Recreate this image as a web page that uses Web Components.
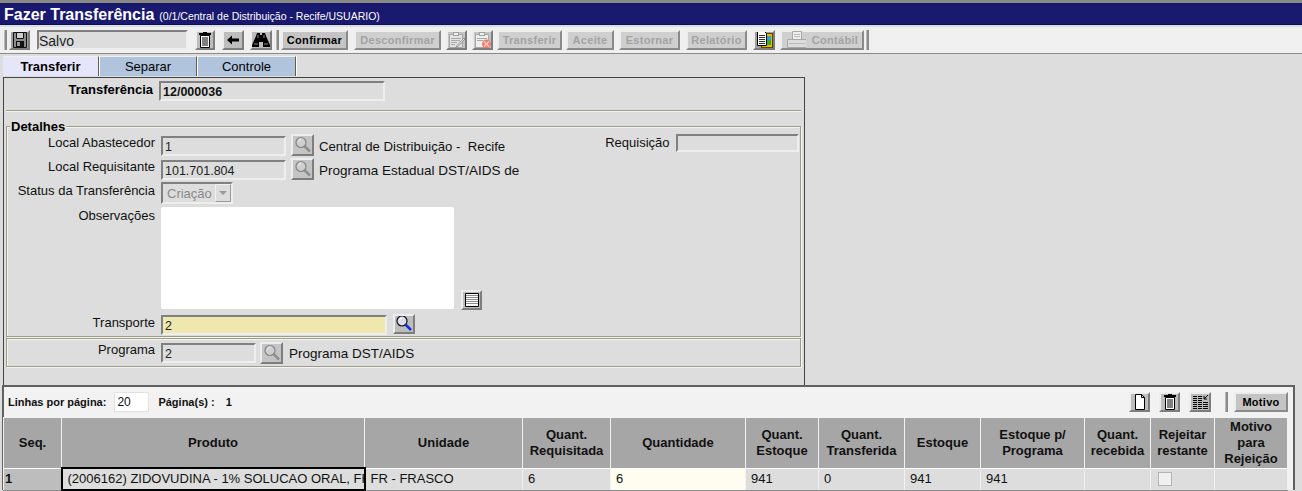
<!DOCTYPE html>
<html lang="pt-BR">
<head>
<meta charset="utf-8">
<title>Fazer Transferência</title>
<style>
  html, body { margin: 0; padding: 0; height: 491px; overflow: hidden; }
  body { background: #dcdddc; font-family: "Liberation Sans", Arial, sans-serif; font-size: 13px; color: #000; }
  app-toolbar > * { flex: none; }
  .desc { font-size: 13.500px; line-height: 16px; white-space: nowrap; }
</style>
</head>
<body>
<app-title sub="(0/1/Central de Distribuição - Recife/USUARIO)">Fazer Transferência</app-title>

<app-toolbar>
  <tool-grip style="margin-left:4px"></tool-grip>
  <icon-btn icon="save" dark style="--w:21px;--h:20px;margin-left:2px"></icon-btn>
  <sunken-field style="--w:151px;--h:20px;--fs:14px;--pl:0px;margin-left:7px">Salvo</sunken-field>
  <icon-btn icon="trash" style="--w:20px;--h:20px;margin-left:7px"></icon-btn>
  <icon-btn icon="arrow" style="--w:22px;--h:20px;margin-left:7px"></icon-btn>
  <icon-btn icon="binoculars" style="--w:22px;--h:20px;margin-left:6px"></icon-btn>
  <tool-grip style="margin-left:4px"></tool-grip>
  <text-btn style="--w:67px;margin-left:2px">Confirmar</text-btn>
  <text-btn disabled style="--w:87px;margin-left:6px">Desconfirmar</text-btn>
  <icon-btn icon="clipedit" flat style="--w:21px;--h:20px;margin-left:5px"></icon-btn>
  <icon-btn icon="clipx" flat style="--w:21px;--h:20px;margin-left:5px"></icon-btn>
  <text-btn disabled style="--w:65px;margin-left:4px">Transferir</text-btn>
  <text-btn disabled style="--w:48px;margin-left:4px">Aceite</text-btn>
  <text-btn disabled style="--w:61px;margin-left:5px">Estornar</text-btn>
  <text-btn disabled style="--w:61px;margin-left:6px">Relatório</text-btn>
  <icon-btn icon="report" dark style="--w:22px;--h:20px;margin-left:6px"></icon-btn>
  <text-btn disabled icon="printer" style="--w:84px;margin-left:5px">Contábil</text-btn>
  <tool-grip style="margin-left:2px"></tool-grip>
</app-toolbar>

<tab-bar>
  <tab-item active style="--w:95px">Transferir</tab-item>
  <tab-item style="--w:96px">Separar</tab-item>
  <tab-item style="--w:97px">Controle</tab-item>
</tab-bar>

<form-panel>
  <field-row strong label="Transferência" style="--lw:147px;margin-top:3px">
    <sunken-field style="--w:226px;--h:20px;--fw:bold;--fs:12.500px;--c:#111">12/000036</sunken-field>
  </field-row>
  <group-box style="--mt:9px;--bh:10px" nolegend></group-box>

  <group-box legend="Detalhes" style="--mt:6px;--bh:211px">
    <field-row label="Local Abastecedor" style="margin-top:-6px">
      <sunken-field style="--w:125px;--h:20px;--mt:2px;--fs:12.500px">1</sunken-field>
      <icon-btn icon="lookup" flat style="--w:23px;--h:22px;margin-left:5px"></icon-btn>
      <span class="desc" style="margin-left:5px;margin-top:5px;font-size:13.200px">Central de Distribuição -&nbsp; Recife</span>
      <label-text style="margin-left:100px;margin-top:1px">Requisição</label-text>
      <sunken-field style="--w:123px;--h:18px;margin:0 0 0 6px"></sunken-field>
    </field-row>
    <field-row label="Local Requisitante" style="margin-top:2px">
      <sunken-field style="--w:125px;--h:20px;--mt:2px;--fs:12.500px">101.701.804</sunken-field>
      <icon-btn icon="lookup" flat style="--w:23px;--h:22px;margin-left:5px"></icon-btn>
      <span class="desc" style="margin-left:5px;margin-top:5px">Programa Estadual DST/AIDS de</span>
    </field-row>
    <field-row label="Status da Transferência" style="margin-top:2px">
      <select-box value="Criação"></select-box>
    </field-row>
    <field-row label="Observações" style="margin-top:3px">
      <memo-box style="--w:293px;--h:102px"></memo-box>
      <icon-btn icon="lines" style="--w:21px;--h:20px;margin:83px 0 0 7px"></icon-btn>
    </field-row>
    <field-row label="Transporte" style="margin-top:4px">
      <sunken-field style="--w:226px;--h:20px;--mt:1px;--bg:#efe8ae;--fs:12.500px">2</sunken-field>
      <icon-btn icon="lookupblue" style="--w:22px;--h:20px;margin-left:6px"></icon-btn>
    </field-row>
  </group-box>

  <group-box style="--mt:1px;--bh:29px">
    <field-row label="Programa" style="margin-top:2px">
      <sunken-field style="--w:95px;--h:20px;--mt:2px;--fs:12.500px">2</sunken-field>
      <icon-btn icon="lookup" flat style="--w:23px;--h:22px;margin-left:4px;margin-top:1px"></icon-btn>
      <span class="desc" style="margin-left:6px;margin-top:5px">Programa DST/AIDS</span>
    </field-row>
  </group-box>
</form-panel>

<grid-panel></grid-panel>

<script>
const ICONS = {
  save: `<path d="M3.500 2.500h13v15h-13z" fill="#8c8c8c" stroke="#111"/><rect x="6" y="3" width="8" height="6" fill="#cfcfcf"/><path d="M6.500 3v5.500h7V3" fill="none" stroke="#111"/><rect x="6" y="11" width="8" height="6" fill="#111"/><rect x="7" y="12" width="3" height="4" fill="#9a9a9a"/>`,
  trash: `<path d="M8 2h4v1h4v2H4V3h4z" fill="#000"/><path d="M5.500 5.500h9v12h-9z" fill="#fff" stroke="#000"/><path d="M8 7v9M10 7v9M12 7v9" stroke="#000"/>`,
  arrow: `<path d="M4 10l5-4.500V8.500h7v3H9v3z" fill="#000"/>`,
  binoculars: `<path d="M6 3h3v2h2V3h3l1 3 4 9v2h-7v-5h-4v5H1v-2l4-9z" fill="#000"/><path d="M3 14h4M13 14h4M7 5v3M13 5v3" stroke="#8a8a8a"/>`,
  clipedit: `<path d="M2.500 4.500h13v13h-13z" fill="#e2e2e2" stroke="#a8a8a8"/><rect x="6.500" y="2.500" width="5" height="3" fill="#ededed" stroke="#a0a0a0"/><path d="M4 8.500h10M4 10.500h9M4 12.500h6M4 14.500h4" stroke="#a8a8a8"/><path d="M17 8l-7 7.500-1.500 2.500 2.500-1.500 7-7.500z" fill="#f2f2f2" stroke="#909090"/>`,
  clipx: `<path d="M2.500 4.500h13v13h-13z" fill="#eee" stroke="#a8a8a8"/><rect x="6.500" y="2.500" width="5" height="3" fill="#eee" stroke="#a0a0a0"/><path d="M4 8.500h10M4 10.500h6" stroke="#a8a8a8"/><circle cx="13.500" cy="14" r="4.500" fill="#e8806e"/><path d="M11 11.500l5 5M16 11.500l-5 5" stroke="#f4c8bc" stroke-width="1.500"/>`,
  report: `<rect x="7.500" y="3.500" width="11" height="14" fill="#e8b800" stroke="#5a4400"/><rect x="13" y="6" width="4" height="4" fill="#30a0e0"/><rect x="13" y="10" width="4" height="5" fill="#30b030"/><path d="M3.500 1.500h7l2 2v12h-9z" fill="#fff" stroke="#000"/><path d="M5 5.500h6M5 7.500h6M5 9.500h6M5 11.500h6M5 13.500h6" stroke="#333"/>`,
  printer: `<path d="M6.500 1.500h9v8h-9z" fill="#eee" stroke="#a8a8a8"/><path d="M8 4.500h6M8 6.500h6" stroke="#bbb"/><path d="M1.500 9.500h19v8h-19z" fill="#dcdcdc" stroke="#a8a8a8"/><path d="M3 13.500h16" stroke="#bbb"/>`,
  lookup: `<circle cx="8" cy="7.500" r="5" fill="#cfcfcf" stroke="#858585" stroke-width="1.200"/><path d="M5.500 6.500a3 3 0 0 1 2.500-2" stroke="#f4f4f4" fill="none"/><path d="M11.500 11l5.500 5.500" stroke="#8e8e8e" stroke-width="2.500"/>`,
  lookupblue: `<circle cx="8" cy="7" r="5" fill="#dde" stroke="#111" stroke-width="1.200"/><path d="M5.500 6a3 3 0 0 1 2.500-2" stroke="#fff" fill="none"/><path d="M11.500 10.500l5.500 5.500" stroke="#1030e0" stroke-width="2.500"/>`,
  lines: `<path d="M3.500 3.500h13v13h-13z" fill="#fff" stroke="#000"/><path d="M4 5.500h12M4 7.500h12M4 9.500h12M4 11.500h12M4 13.500h12" stroke="#8c8c8c"/>`,
  newdoc: `<path d="M5.500 2.500h6l3 3v12h-9z" fill="#fff" stroke="#000"/><path d="M11.500 2.500v3h3" fill="none" stroke="#000"/>`,
  columns: `<path d="M3 4.500h4M3 6.500h4M3 8.500h4M3 10.500h4M3 12.500h4M3 14.500h4M3 16.500h4M8 4.500h4M8 6.500h4M8 8.500h4M8 10.500h4M8 12.500h4M8 14.500h4M8 16.500h4M13 10.500h5M13 12.500h5M13 14.500h5M13 16.500h5" stroke="#000"/><path d="M18 3l-4 4M14 4v3h3" stroke="#000" fill="none"/>`
};

function svg(name) {
  return `<svg width="20" height="20" viewBox="0 0 20 20" aria-hidden="true">${ICONS[name] || ''}</svg>`;
}

class AppTitle extends HTMLElement {
  connectedCallback() {
    this.attachShadow({ mode: 'open' }).innerHTML = `
      <style>
        :host {
          display: flex; align-items: baseline; height: 22px; padding: 0 0 0 4px;
          background: #191970; color: #fff;
          border-top: 3px solid #8a8a84; border-bottom: 2px solid #d8dce8;
          box-shadow: inset 0 -1px 0 #10104a;
        }
        b { font: bold 16px/23px "Liberation Sans", sans-serif; }
        small { font: 10.500px/23px "Liberation Sans", sans-serif; margin-left: 5px; }
      </style>
      <b><slot></slot></b><small>${this.getAttribute('sub')}</small>`;
  }
}

class AppToolbar extends HTMLElement {
  connectedCallback() {
    this.attachShadow({ mode: 'open' }).innerHTML = `
      <style>
        :host {
          display: flex; align-items: center; height: 26px;
          background: #f0f0f0; border-bottom: 1px solid #8a8a8a;
        }
      </style>
      <slot></slot>`;
  }
}

class ToolGrip extends HTMLElement {
  connectedCallback() {
    this.attachShadow({ mode: 'open' }).innerHTML = `
      <style>
        :host { display: block; width: 1px; height: 20px; background: #8a8a8a; border-left: 1px solid #bbb; border-right: 1px solid #8a8a8a; }
      </style>`;
  }
}

class IconBtn extends HTMLElement {
  connectedCallback() {
    const flat = this.hasAttribute('flat');
    const dark = this.hasAttribute('dark');
    this.attachShadow({ mode: 'open' }).innerHTML = `
      <style>
        :host {
          display: flex; align-items: center; justify-content: center; box-sizing: border-box;
          width: var(--w); height: var(--h); overflow: hidden;
          background: ${dark ? '#a0a0a0' : flat ? '#c4c4c4' : '#bdbdbd'};
          border: 2px solid; border-color: #ededed #7d7d7d #7d7d7d #ededed;
        }
        svg { flex: none; }
      </style>
      ${svg(this.getAttribute('icon'))}`;
  }
}

class TextBtn extends HTMLElement {
  connectedCallback() {
    const off = this.hasAttribute('disabled');
    const icon = this.getAttribute('icon');
    this.attachShadow({ mode: 'open' }).innerHTML = `
      <style>
        :host {
          display: flex; align-items: center; justify-content: center; box-sizing: border-box;
          width: var(--w); height: 20px; gap: 6px;
          background: ${off ? '#cfcfcf' : '#c4c4c4'};
          border: 2px solid; border-color: #ededed #8a8a8a #8a8a8a #ededed;
          font: bold 11px "Liberation Sans", sans-serif; letter-spacing: .3px;
          color: ${off ? '#a3a3a3' : '#000'};
        }
      </style>
      ${icon ? svg(icon) : ''}<slot></slot>`;
  }
}

class SunkenField extends HTMLElement {
  connectedCallback() {
    this.attachShadow({ mode: 'open' }).innerHTML = `
      <style>
        :host {
          display: block; box-sizing: border-box; width: var(--w); height: var(--h); margin-top: var(--mt, 0);
          padding: 2px 0 0 var(--pl, 2px); overflow: hidden; white-space: nowrap;
          background: var(--bg, #dcdddc); color: var(--c, #222);
          border: 2px solid; border-color: #808080 #eeeeee #eeeeee #808080;
          font: var(--fw, normal) var(--fs, 13px)/14px "Liberation Sans", sans-serif;
        }
      </style>
      <slot></slot>`;
  }
}

class TabBar extends HTMLElement {
  connectedCallback() {
    this.attachShadow({ mode: 'open' }).innerHTML = `
      <style>
        :host { display: flex; height: 20px; margin: 2px 0 1px; padding-left: 3px; }
      </style>
      <slot></slot>`;
  }
}

class TabItem extends HTMLElement {
  connectedCallback() {
    const on = this.hasAttribute('active');
    this.attachShadow({ mode: 'open' }).innerHTML = `
      <style>
        :host {
          display: flex; align-items: center; justify-content: center; width: var(--w);
          background: ${on ? '#e6e6fa' : '#b0c4de'};
          border-top: 1px solid #f0f0f0; border-right: 1px solid #5f5f4c;
          box-shadow: 1px 0 0 #fff; margin-right: 1px;
          font: ${on ? 'bold' : 'normal'} 13px "Liberation Sans", sans-serif;
        }
      </style>
      <slot></slot>`;
  }
}

class FormPanel extends HTMLElement {
  connectedCallback() {
    this.attachShadow({ mode: 'open' }).innerHTML = `
      <style>
        :host {
          display: block; box-sizing: border-box; width: 802px; height: 308px; margin-left: 3px;
          padding: 0 3px 0 2px; border: 1px solid #444; border-bottom: 0;
        }
      </style>
      <slot></slot>`;
  }
}

class GroupBox extends HTMLElement {
  connectedCallback() {
    const legend = this.getAttribute('legend');
    this.attachShadow({ mode: 'open' }).innerHTML = `
      <style>
        :host {
          display: block; box-sizing: border-box; height: var(--bh); margin-top: var(--mt, 0);
          border: 1px solid #9c9c84; box-shadow: inset 1px 1px 0 #f4f4f4, 1px 1px 0 #f4f4f4;
          position: relative;
        }
        :host([nolegend]) { border-width: 1px 0 0; box-shadow: inset 0 1px 0 #f4f4f4; }
        b {
          position: absolute; left: 3px; top: -7px; padding: 0 1px; background: #dcdddc;
          font: bold 13px/14px "Liberation Sans", sans-serif;
        }
        .body { padding-top: ${legend ? '13px' : '0'}; }
      </style>
      ${legend ? `<b>${legend}</b>` : ''}
      <div class="body"><slot></slot></div>`;
  }
}

class LabelText extends HTMLElement {
  connectedCallback() {
    this.attachShadow({ mode: 'open' }).innerHTML = `
      <style>
        :host { display: block; font: 13px/16px "Liberation Sans", sans-serif; white-space: nowrap; color: #111; }
      </style>
      <slot></slot>`;
  }
}

class FieldRow extends HTMLElement {
  connectedCallback() {
    const strong = this.hasAttribute('strong');
    this.attachShadow({ mode: 'open' }).innerHTML = `
      <style>
        :host { display: flex; align-items: flex-start; font: 13px/16px "Liberation Sans", sans-serif; color: #111; }
        label {
          flex: none; box-sizing: border-box; width: var(--lw, 148px); padding-top: 1px; text-align: right; white-space: nowrap;
          font-weight: ${strong ? 'bold' : 'normal'};
          ${strong ? 'color:#000;' : ''}
        }
        .ctl { display: flex; align-items: flex-start; margin-left: 6px; }
      </style>
      <label>${this.getAttribute('label')}</label>
      <div class="ctl"><slot></slot></div>`;
  }
}

class SelectBox extends HTMLElement {
  connectedCallback() {
    this.attachShadow({ mode: 'open' }).innerHTML = `
      <style>
        :host {
          display: flex; box-sizing: border-box; width: 72px; height: 22px; align-items: center;
          border: 2px solid; border-color: #808080 #eeeeee #eeeeee #808080;
          font: 13px "Liberation Sans", sans-serif; color: #8a8a8a;
        }
        span { flex: 1; padding-left: 4px; }
        i { display: flex; align-items: center; justify-content: center; width: 16px; height: 18px; box-sizing: border-box; border: 1px solid #f0f0f0; border-right-color: #999; border-bottom-color: #999; }
        i::after { content: ""; border: 4px solid transparent; border-top: 4px solid #999; border-bottom: 0; }
      </style>
      <span>${this.getAttribute('value')}</span><i></i>`;
  }
}

class MemoBox extends HTMLElement {
  connectedCallback() {
    this.attachShadow({ mode: 'open' }).innerHTML = `
      <style>
        :host { display: block; width: var(--w); height: var(--h); background: #fff; border-radius: 2px; }
      </style>`;
  }
}

const COLUMNS = [
  ['Seq.', 58], ['Produto', 303], ['Unidade', 158], ['Quant.<br>Requisitada', 88],
  ['Quantidade', 135], ['Quant.<br>Estoque', 73], ['Quant.<br>Transferida', 86],
  ['Estoque', 76], ['Estoque p/<br>Programa', 104], ['Quant.<br>recebida', 66],
  ['Rejeitar<br>restante', 64], ['Motivo<br>para<br>Rejeição', 73]
];
const ROW = ['1', '(2006162) ZIDOVUDINA - 1% SOLUCAO ORAL, FR', 'FR - FRASCO', '6', '6', '941', '0', '941', '941', '', '', ''];

class GridPanel extends HTMLElement {
  connectedCallback() {
    const cols = COLUMNS.map(c => `<col style="width:${c[1]}px">`).join('');
    const head = COLUMNS.map(c => `<th>${c[0]}</th>`).join('');
    const cells = ROW.map((v, i) => {
      if (i === 0) return `<td class="seq">${v}</td>`;
      if (i === 1) return `<td class="cur"><div>${v}</div></td>`;
      if (i === 4) return `<td class="edit">${v}</td>`;
      if (i === 10) return `<td><span class="chk"></span></td>`;
      return `<td>${v}</td>`;
    }).join('');
    this.attachShadow({ mode: 'open' }).innerHTML = `
      <style>
        :host {
          display: block; box-sizing: border-box; width: 1293px; height: 105px; margin-left: 2px;
          background: #f2f2f2; border: 2px solid #606060; border-width: 2px 2px 0;
          font-family: "Liberation Sans", sans-serif;
        }
        .pager { display: flex; align-items: center; height: 30px; padding-left: 4px; font: bold 11px "Liberation Sans", sans-serif; color: #111; }
        .size { box-sizing: border-box; width: 35px; height: 20px; margin-left: 8px; padding-left: 2px; background: #fff; border: 1px solid #e2e2e2; font: 12px/18px "Liberation Sans", sans-serif; }
        .pages { margin-left: 9px; }
        .num { margin-left: 11px; }
        .tools { display: flex; align-items: center; margin-left: auto; padding-right: 5px; }
        table { border-collapse: collapse; table-layout: fixed; width: 1284px; margin-left: -1px; }
        th {
          height: 49px; padding: 0; background: #a6a6a6; color: #111; text-align: center;
          font: bold 13px/16px "Liberation Sans", sans-serif; border: 1px solid #f2f2f2; border-width: 1px 1px 0 1px;
        }
        td {
          height: 20px; padding: 0 0 0 5px; background: #dcdddc; color: #111; white-space: nowrap; overflow: hidden;
          font: 13px/16px "Liberation Sans", sans-serif;
          border: 1px solid #f2f2f2; border-top-color: #fff; border-bottom: 1px solid #8c8c8c;
        }
        td.seq { padding-left: 1px; font-weight: bold; background: #bdbdbd; }
        td.cur { padding: 0; border: 2px solid #000; }
        td.cur div { overflow: hidden; padding-left: 5px; }
        td.edit { background: #fffdf0; }
        .chk { display: block; width: 12px; height: 12px; margin-left: 2px; background: #f0f0f0; border: 1px solid #b4b4b4; }
      </style>
      <div class="pager">
        <span>Linhas por página:</span>
        <div class="size">20</div>
        <span class="pages">Página(s) :</span>
        <span class="num">1</span>
        <div class="tools">
          <icon-btn icon="newdoc" style="--w:21px;--h:20px"></icon-btn>
          <icon-btn icon="trash" style="--w:21px;--h:20px;margin-left:9px"></icon-btn>
          <icon-btn icon="columns" style="--w:22px;--h:20px;margin-left:9px"></icon-btn>
          <tool-grip style="margin:0 6px 0 14px"></tool-grip>
          <text-btn style="--w:54px">Motivo</text-btn>
        </div>
      </div>
      <table>
        <colgroup>${cols}</colgroup>
        <tr>${head}</tr>
        <tr>${cells}</tr>
      </table>`;
  }
}

customElements.define('app-title', AppTitle);
customElements.define('app-toolbar', AppToolbar);
customElements.define('tool-grip', ToolGrip);
customElements.define('icon-btn', IconBtn);
customElements.define('text-btn', TextBtn);
customElements.define('sunken-field', SunkenField);
customElements.define('tab-bar', TabBar);
customElements.define('tab-item', TabItem);
customElements.define('form-panel', FormPanel);
customElements.define('group-box', GroupBox);
customElements.define('label-text', LabelText);
customElements.define('field-row', FieldRow);
customElements.define('select-box', SelectBox);
customElements.define('memo-box', MemoBox);
customElements.define('grid-panel', GridPanel);
</script>
</body>
</html>
